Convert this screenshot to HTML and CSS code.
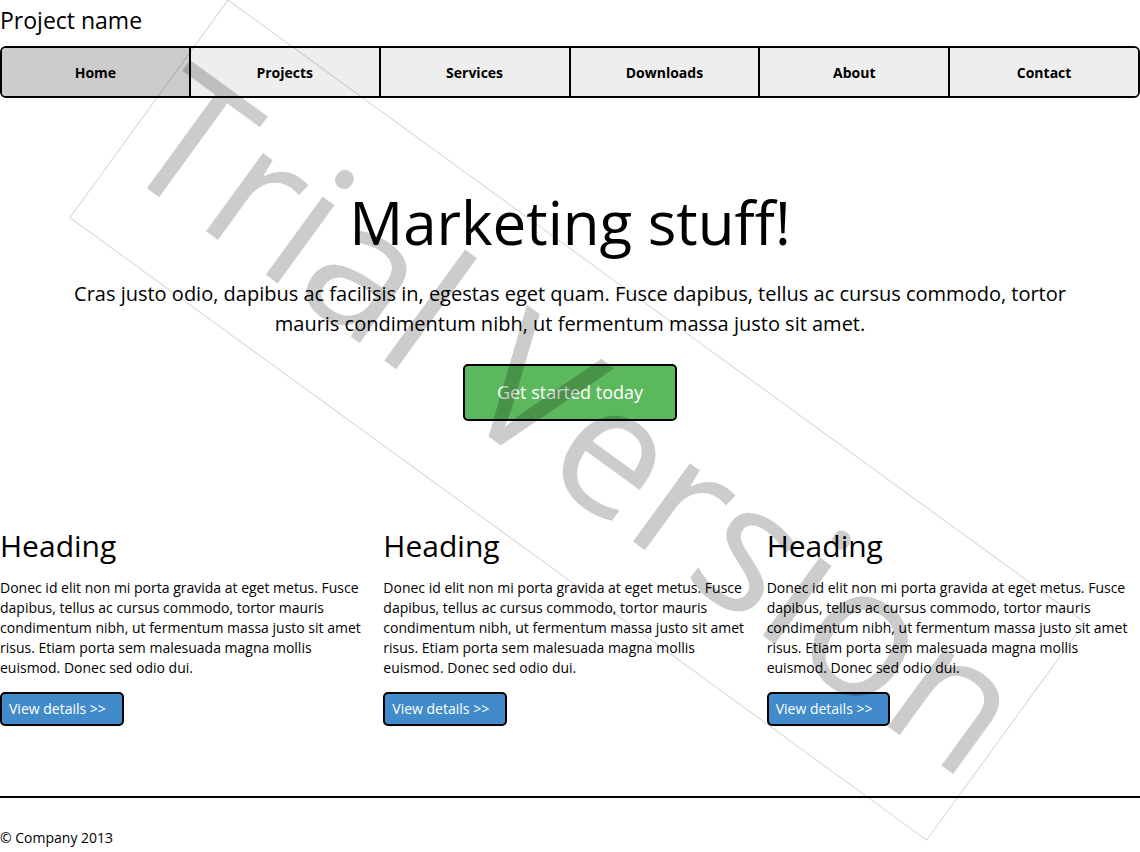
FILE: index.html
```html
<!DOCTYPE html>
<html lang="en">
<head>
<meta charset="utf-8">
<title>Project name</title>
<link rel="stylesheet" href="styles.css">
</head>
<body>
<div class="page">
  <header>
    <p class="brand">Project name</p>
    <nav class="nav">
      <a class="nav-item active" href="#">Home</a>
      <a class="nav-item" href="#">Projects</a>
      <a class="nav-item" href="#">Services</a>
      <a class="nav-item" href="#">Downloads</a>
      <a class="nav-item" href="#">About</a>
      <a class="nav-item" href="#">Contact</a>
    </nav>
  </header>
  <main>
    <section class="hero">
      <h1 class="hero-title">Marketing stuff!</h1>
      <p class="hero-lead">Cras justo odio, dapibus ac facilisis in, egestas eget quam. Fusce dapibus, tellus ac cursus commodo, tortor mauris condimentum nibh, ut fermentum massa justo sit amet.</p>
      <button class="btn btn-success" type="button">Get started today</button>
    </section>
    <div class="columns">
      <section class="column">
        <h2 class="column-title">Heading</h2>
        <p class="column-text">Donec id elit non mi porta gravida at eget metus. Fusce dapibus, tellus ac cursus commodo, tortor mauris condimentum nibh, ut fermentum massa justo sit amet risus. Etiam porta sem malesuada magna mollis euismod. Donec sed odio dui.</p>
        <button class="btn btn-primary" type="button">View details &gt;&gt;</button>
      </section>
      <section class="column">
        <h2 class="column-title">Heading</h2>
        <p class="column-text">Donec id elit non mi porta gravida at eget metus. Fusce dapibus, tellus ac cursus commodo, tortor mauris condimentum nibh, ut fermentum massa justo sit amet risus. Etiam porta sem malesuada magna mollis euismod. Donec sed odio dui.</p>
        <button class="btn btn-primary" type="button">View details &gt;&gt;</button>
      </section>
      <section class="column">
        <h2 class="column-title">Heading</h2>
        <p class="column-text">Donec id elit non mi porta gravida at eget metus. Fusce dapibus, tellus ac cursus commodo, tortor mauris condimentum nibh, ut fermentum massa justo sit amet risus. Etiam porta sem malesuada magna mollis euismod. Donec sed odio dui.</p>
        <button class="btn btn-primary" type="button">View details &gt;&gt;</button>
      </section>
    </div>
  </main>
  <footer class="footer">© Company 2013</footer>
  <svg class="watermark" viewBox="0 0 1140 852">
    <g transform="translate(228 0) rotate(36)">
      <rect class="watermark-frame" x="0" y="0" width="1059" height="269"/>
      <text class="watermark-text" x="3" y="200">Trial <tspan x="421">Version</tspan></text>
    </g>
  </svg>
</div>
</body>
</html>
```
FILE: styles.css
```css
* { box-sizing: border-box; }
body {
  margin: 0;
  background: #fff;
  color: #000;
  font-family: "Segoe UI", "Open Sans", "Noto Sans", sans-serif;
  font-size: 14px;
  line-height: 20px;
}
h1, h2, p { margin: 0; font-weight: 400; }
.page { position: relative; overflow: hidden; }
.brand { padding: 4px 0 10px; font-size: 23px; line-height: 32px; }
.nav {
  display: grid;
  grid-template-columns: 187fr repeat(5, 190fr);
  border: 2px solid #000;
  border-radius: 6px;
  overflow: hidden;
}
.nav-item {
  padding: 15px 0 13px;
  background: #eee;
  border-left: 2px solid #000;
  color: #000;
  font-weight: 700;
  text-align: center;
  text-decoration: none;
}
.nav-item:first-child { border-left: 0; }
.nav-item.active { background: #ccc; }
.hero {
  display: flex;
  flex-direction: column;
  align-items: center;
  padding: 82px 60px 105px;
  text-align: center;
}
.hero-title { font-size: 60px; line-height: 84px; }
.hero-lead { padding: 15px 0 25px; font-size: 20px; line-height: 30px; }
.btn {
  border: 2px solid #000;
  border-radius: 5px;
  color: #fff;
  font-family: inherit;
  white-space: nowrap;
}
.btn-success { padding: 12px 32px; background: #5cb85c; font-size: 18px; line-height: 29px; }
.btn-primary { padding: 5px 16px 5px 7px; background: #428bca; font-size: 14px; line-height: 20px; }
.columns { display: grid; grid-template-columns: repeat(3, 1fr); gap: 10px; }
.column { padding-right: 5px; }
.column-title { padding-bottom: 12px; font-size: 30px; line-height: 40px; }
.column-text { padding-bottom: 14px; }
.footer { margin-top: 70px; padding: 30px 0 4px; border-top: 2px solid #000; }
.watermark {
  position: absolute;
  top: 0;
  left: 0;
  width: 100%;
  pointer-events: none;
}
.watermark-frame { fill: none; stroke: #000; stroke-opacity: 0.16; }
.watermark-text { fill: #000; fill-opacity: 0.2; font-size: 181px; }
```
